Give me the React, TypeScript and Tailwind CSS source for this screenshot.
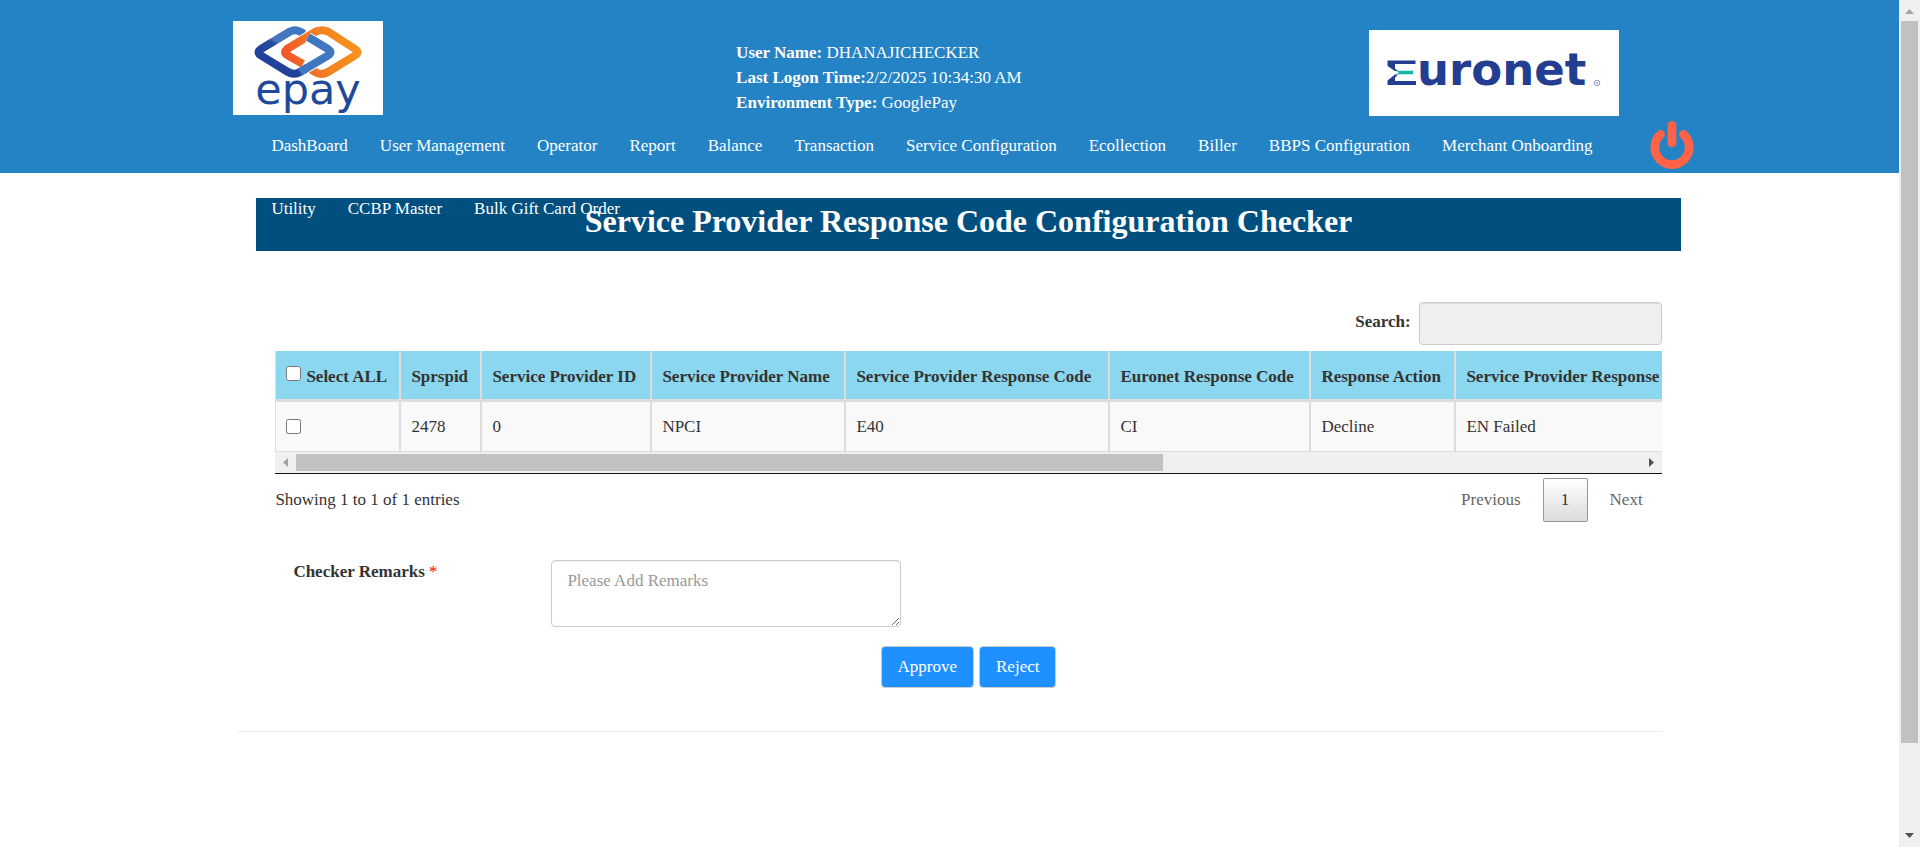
import React from "react";

const menu = [
  "DashBoard",
  "User Management",
  "Operator",
  "Report",
  "Balance",
  "Transaction",
  "Service Configuration",
  "Ecollection",
  "Biller",
  "BBPS Configuration",
  "Merchant Onboarding",
  "Utility",
  "CCBP Master",
  "Bulk Gift Card Order",
];

const columns = [
  { title: "Sprspid", value: "2478", width: "w-[81px]" },
  { title: "Service Provider ID", value: "0", width: "w-[170px]" },
  { title: "Service Provider Name", value: "NPCI", width: "w-[194px]" },
  { title: "Service Provider Response Code", value: "E40", width: "w-[264px]" },
  { title: "Euronet Response Code", value: "CI", width: "w-[201px]" },
  { title: "Response Action", value: "Decline", width: "w-[145px]" },
  { title: "Service Provider Response", value: "EN Failed", width: "" },
];

function EpayLogo() {
  return (
    <svg viewBox="0 0 150 94" className="block h-[94px] w-[150px]" role="img" aria-label="epay">
      <defs>
        <linearGradient id="blueBand" x1="0" y1="1" x2="1" y2="0">
          <stop offset="0" stopColor="#1f3a93" />
          <stop offset="0.45" stopColor="#2448a0" />
          <stop offset="0.5" stopColor="#4a74bd" />
          <stop offset="1" stopColor="#2f7cc8" />
        </linearGradient>
        <linearGradient id="orangeBand" x1="0" y1="0.4" x2="1" y2="0.2">
          <stop offset="0" stopColor="#f0592a" />
          <stop offset="0.5" stopColor="#f58220" />
          <stop offset="1" stopColor="#f7931e" />
        </linearGradient>
      </defs>
      <rect width="150" height="94" fill="#fff" />
      <g fill="none" strokeWidth="8" strokeLinejoin="round">
        <path d="M71 13 L67 10.500 Q62 8 57 10.500 L28 28 Q23 31.300 28 34.500 L55 51 Q61 54.500 67 51 L95 34.500 Q100 31.300 95 28 L75 16" stroke="url(#blueBand)" />
        <path d="M70 43 L54 34 Q50 31.300 54 28 L83 10.500 Q89 8 95 10.500 L122 28 Q127 31.300 122 34.500 L95 51 Q89 54.500 84 52 L78 48.500" stroke="#fff" strokeWidth="10" />
        <path d="M70 43 L54 34 Q50 31.300 54 28 L83 10.500 Q89 8 95 10.500 L122 28 Q127 31.300 122 34.500 L95 51 Q89 54.500 84 52 L78 48.500" stroke="url(#orangeBand)" />
        <path d="M74 47 L95 34.500 Q100 31.300 95 28 L75 16" stroke="#fff" strokeWidth="10" />
        <path d="M67 51 L95 34.500 Q100 31.300 95 28 L75 16" stroke="#3f78c0" />
      </g>
      <text x="75" y="83" textAnchor="middle" fill="#1f4a9c" fontFamily="'DejaVu Sans', sans-serif" fontSize="43">
        epay
      </text>
    </svg>
  );
}

function EuronetLogo() {
  return (
    <svg viewBox="0 0 250 86" className="block h-[86px] w-[250px]" role="img" aria-label="Euronet">
      <rect width="250" height="86" fill="#fff" />
      <path d="M18.500 30.500 H46.500 V34 H26 V38.500 L29 41 H26 L18.500 36 Z" fill="#233e90" />
      <path d="M18.500 55 V50.500 L26 44.500 H29 L26 47.500 V51 H47 V55 Z" fill="#233e90" />
      <path d="M27 40.700 H44 V44.300 H27 L30 42.500 Z" fill="#12b5a6" />
      <text x="48" y="55" fill="#233e90" fontFamily="'DejaVu Sans', sans-serif" fontWeight="700" fontSize="45">
        uronet
      </text>
      <circle cx="228" cy="53" r="2.800" fill="none" stroke="#8a97c4" strokeWidth="1" />
      <circle cx="228" cy="53" r="0.900" fill="#8a97c4" />
    </svg>
  );
}

function PowerIcon() {
  return (
    <svg viewBox="0 0 44 48" className="block h-12 w-11" fill="none" stroke="#ff6347" strokeWidth="8.800" strokeLinecap="round" aria-hidden="true">
      <path d="M10.500 13.500 A17.200 17.200 0 1 0 33.500 13.500" />
      <path d="M22 4.500 V22" />
    </svg>
  );
}

function Header() {
  return (
    <header className="h-[173px] bg-[#2483c4] text-white">
      <div className="mx-auto w-3/4">
        <div className="-ml-1 grid h-[114px] grid-cols-[35.2%_44.3%_auto] items-start">
          <div className="pt-[21px]">
            <EpayLogo />
          </div>
          <div className="pt-10 leading-[25px]">
            <p><b>User Name:</b> DHANAJICHECKER</p>
            <p><b>Last Logon Time:</b>2/2/2025 10:34:30 AM</p>
            <p><b>Environment Type:</b> GooglePay</p>
          </div>
          <div className="pt-[30px]">
            <EuronetLogo />
          </div>
        </div>
        <div className="-mr-8 flex items-start">
          <nav className="relative z-10 ml-[18px] mr-2 flex flex-1 flex-wrap">
            {menu.map((item) => (
              <a key={item} href="#" className="px-4 leading-[63px] whitespace-nowrap">
                {item}
              </a>
            ))}
          </nav>
          <button type="button" aria-label="Log out" className="mt-[7px]">
            <PowerIcon />
          </button>
        </div>
      </div>
    </header>
  );
}

function HorizontalScrollbar() {
  return (
    <div className="flex h-[21px] items-center bg-[#f0f0f0]">
      <svg viewBox="0 0 21 21" className="h-[21px] w-[21px] shrink-0" aria-hidden="true">
        <path d="M13 6 V15 L8 10.500 Z" fill="#a3a3a3" />
      </svg>
      <div className="flex-1">
        <div className="h-[17px] w-[64.5%] bg-[#c1c1c1]" />
      </div>
      <svg viewBox="0 0 21 21" className="h-[21px] w-[21px] shrink-0" aria-hidden="true">
        <path d="M8 6 V15 L13 10.500 Z" fill="#505050" />
      </svg>
    </div>
  );
}

function VerticalScrollbar() {
  return (
    <div className="flex w-[21px] shrink-0 flex-col items-center bg-[#f0f0f0]">
      <svg viewBox="0 0 21 21" className="h-[21px] w-[21px] shrink-0" aria-hidden="true">
        <path d="M6 14 H15 L10.500 9 Z" fill="#a3a3a3" />
      </svg>
      <div className="w-full flex-1 px-[2px]">
        <div className="h-[89.7%] bg-[#c1c1c1]" />
      </div>
      <svg viewBox="0 0 21 21" className="h-[21px] w-[21px] shrink-0" aria-hidden="true">
        <path d="M6 7 H15 L10.500 12 Z" fill="#505050" />
      </svg>
    </div>
  );
}

function ResponseTable() {
  return (
    <div className="border-b border-[#111]">
      <div className="overflow-hidden">
        <table className="w-[155%] table-fixed border-separate border-spacing-0 whitespace-nowrap text-left">
          <thead>
            <tr className="h-[51px] bg-[#8bd7ef]">
              <th className="w-[125px] border-x border-b-3 border-[#ddd] px-[10px] pt-[3px] font-bold">
                <label className="flex items-center gap-[5px]">
                  <input type="checkbox" className="mb-[6px] h-[15px] w-[15px]" />
                  Select ALL
                </label>
              </th>
              {columns.map((c) => (
                <th key={c.title} className={`${c.width} border-x border-b-3 border-[#ddd] px-[10px] pt-[3px] font-bold`}>
                  {c.title}
                </th>
              ))}
            </tr>
          </thead>
          <tbody>
            <tr className="h-[50px] bg-[#f9f9f9]">
              <td className="border-x border-b border-[#ddd] px-[10px]">
                <input type="checkbox" aria-label="Select row 2478" className="block h-[15px] w-[15px]" />
              </td>
              {columns.map((c) => (
                <td key={c.title} className="border-x border-b border-[#ddd] px-[10px]">
                  {c.value}
                </td>
              ))}
            </tr>
          </tbody>
        </table>
      </div>
      <HorizontalScrollbar />
    </div>
  );
}

export default function App() {
  return (
    <div className="flex min-h-screen bg-white font-['Liberation_Serif','Times_New_Roman',serif] text-[17px] leading-6 text-[#333]">
      <div className="min-w-0 flex-1">
        <Header />
        <main className="mx-auto w-3/4">
          <h1 className="mt-[25px] -mr-[19px] ml-[19px] h-[53px] bg-[#004f7f] pt-[3px] text-center text-[32px] leading-10 font-bold text-white">
            Service Provider Response Code Configuration Checker
          </h1>
          <section className="mt-[51px] pl-[38px]">
            <div className="flex items-start justify-end gap-2">
              <label htmlFor="search" className="pt-2 font-bold">Search:</label>
              <input
                id="search"
                type="search"
                className="h-[43px] w-[243px] rounded border border-[#ccc] bg-[#f0f0f0] px-3 shadow-[inset_0_1px_1px_rgba(0,0,0,0.075)]"
              />
            </div>
            <div className="mt-[6px]">
              <ResponseTable />
            </div>
            <div className="flex items-start justify-between">
              <p className="pt-[14px]">Showing 1 to 1 of 1 entries</p>
              <div className="mt-1 flex gap-[3px]">
                <button type="button" className="h-11 px-[19px] text-[#666]">Previous</button>
                <button type="button" className="h-11 w-[45px] rounded-xs border border-[#979797] bg-linear-to-b from-white to-[#dcdcdc]">1</button>
                <button type="button" className="h-11 px-[19px] text-[#666]">Next</button>
              </div>
            </div>
            <div className="mt-[38px] flex items-start pl-[18px]">
              <label htmlFor="remarks" className="w-[258px] font-bold">
                Checker Remarks <span className="font-normal text-[#f00]">*</span>
              </label>
              <textarea
                id="remarks"
                placeholder="Please Add Remarks"
                className="h-[67px] w-[350px] rounded border border-[#ccc] px-[15px] py-2 placeholder:text-[#999] shadow-[inset_0_1px_1px_rgba(0,0,0,0.075)]"
              />
            </div>
            <div className="mt-[19px] flex justify-center gap-[5px] text-white">
              <button type="button" className="h-[42px] rounded border border-[#ccc] bg-[#1e90ff] px-4">Approve</button>
              <button type="button" className="h-[42px] rounded border border-[#ccc] bg-[#1e90ff] px-4">Reject</button>
            </div>
          </section>
          <hr className="mt-[43px] border-[#eee]" />
        </main>
      </div>
      <VerticalScrollbar />
    </div>
  );
}
